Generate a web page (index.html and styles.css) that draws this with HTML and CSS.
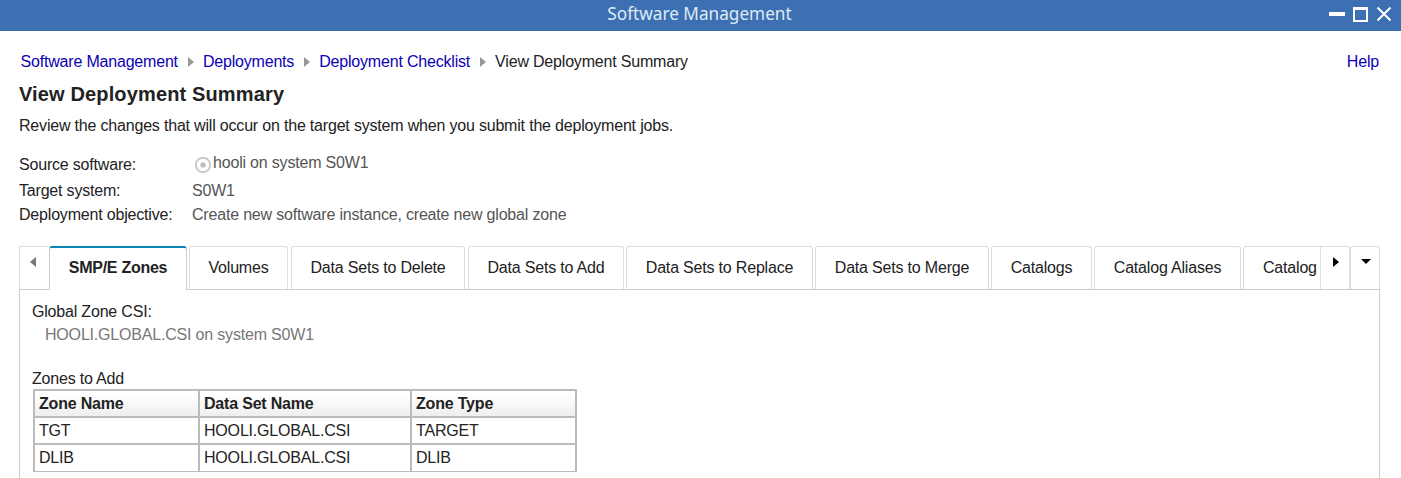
FILE: index.html
```html
<!DOCTYPE html>
<html lang="en">
<head>
<meta charset="utf-8">
<title>Software Management</title>
<link rel="stylesheet" href="styles.css">
</head>
<body>
<header class="titlebar">
  <span class="titlebar-text">Software Management</span>
  <svg class="window-controls" width="64" height="20" viewBox="0 0 64 20" fill="none" stroke="#fff">
    <path d="M0 9h16" stroke-width="4"/>
    <path d="M25 4h13v12H25z" stroke-width="2"/>
    <path d="M24 3.500h15" stroke-width="3"/>
    <path d="M48.500 2.500l13 13M61.500 2.500l-13 13" stroke-width="2"/>
  </svg>
</header>
<main class="page">
  <nav class="breadcrumb">
    <a class="link" href="#">Software Management</a>
    <svg class="crumb-arrow" width="6" height="10" viewBox="0 0 6 10"><path d="M0 0l6 5-6 5z"/></svg>
    <a class="link" href="#">Deployments</a>
    <svg class="crumb-arrow" width="6" height="10" viewBox="0 0 6 10"><path d="M0 0l6 5-6 5z"/></svg>
    <a class="link" href="#">Deployment Checklist</a>
    <svg class="crumb-arrow" width="6" height="10" viewBox="0 0 6 10"><path d="M0 0l6 5-6 5z"/></svg>
    <span>View Deployment Summary</span>
    <a class="link help" href="#">Help</a>
  </nav>
  <h1 class="heading">View Deployment Summary</h1>
  <p class="intro">Review the changes that will occur on the target system when you submit the deployment jobs.</p>
  <dl class="details">
    <dt>Source software:</dt>
    <dd class="source"><svg class="disc" width="18" height="18" viewBox="0 0 18 18" fill="none"><circle cx="9" cy="9" r="7.200" stroke="#c9c9c9" stroke-width="2"/><circle cx="9" cy="9" r="2.600" fill="#bdbdbd" stroke="#d9d9d9"/></svg><span>hooli on system S0W1</span></dd>
    <dt>Target system:</dt>
    <dd>S0W1</dd>
    <dt>Deployment objective:</dt>
    <dd>Create new software instance, create new global zone</dd>
  </dl>
  <div class="tabs">
    <button class="tab-button prev"><svg width="6" height="10" viewBox="0 0 6 10"><path d="M6 0v10L0 5z" fill="#777"/></svg></button>
    <div class="tab active">SMP/E Zones</div>
    <div class="tab volumes">Volumes</div>
    <div class="tab delete">Data Sets to Delete</div>
    <div class="tab add">Data Sets to Add</div>
    <div class="tab replace">Data Sets to Replace</div>
    <div class="tab merge">Data Sets to Merge</div>
    <div class="tab catalogs">Catalogs</div>
    <div class="tab aliases">Catalog Aliases</div>
    <div class="tab clipped">Catalog</div>
    <button class="tab-button next"><svg width="6" height="10" viewBox="0 0 6 10"><path d="M0 0l6 5-6 5z"/></svg></button>
    <button class="tab-button menu"><svg width="10" height="5" viewBox="0 0 10 5"><path d="M0 0h10L5 5z"/></svg></button>
  </div>
  <section class="panel">
    <div class="csi-label">Global Zone CSI:</div>
    <div class="csi-value">HOOLI.GLOBAL.CSI on system S0W1</div>
    <div class="zones-label">Zones to Add</div>
    <div class="zones">
      <div class="cell head">Zone Name</div><div class="cell head">Data Set Name</div><div class="cell head">Zone Type</div>
      <div class="cell">TGT</div><div class="cell">HOOLI.GLOBAL.CSI</div><div class="cell">TARGET</div>
      <div class="cell">DLIB</div><div class="cell">HOOLI.GLOBAL.CSI</div><div class="cell">DLIB</div>
    </div>
  </section>
</main>
</body>
</html>
```
FILE: styles.css
```css
* { box-sizing: border-box; }
body {
  margin: 0;
  height: 478px;
  overflow: hidden;
  background: #fff;
  color: #222;
  font: 16px/20px "Liberation Sans", Arial, sans-serif;
  letter-spacing: -0.19px;
  white-space: nowrap;
}
.titlebar {
  height: 31px;
  display: grid;
  grid-template-columns: 1fr auto 1fr;
  align-items: start;
  background: #3d70b2;
  padding: 0 8px 0 6px;
}
.titlebar-text {
  grid-column: 2;
  color: #dfeaf7;
  font: 17.2px/27px "Noto Sans", sans-serif;
  letter-spacing: 0;
}
.window-controls { justify-self: end; margin-top: 5px; }
.page { padding: 21px 21px 0 19px; }
.breadcrumb { display: flex; align-items: center; height: 20px; padding: 0 1px 0 1.5px; }
.link { color: #0b00b5; text-decoration: none; }
.crumb-arrow { margin: 0 9px 0 10px; fill: #999; }
.help { margin-left: auto; }
.heading { margin: 8px 0 0; font-size: 20px; line-height: 28px; letter-spacing: 0.14px; }
.intro { margin: 8px 0 0; }
.details {
  margin: 19px 0 0;
  display: grid;
  grid-template-columns: 173px auto;
  grid-template-rows: 26px 24px 24px;
}
.details dd { margin: 0; color: #555; }
.source { display: flex; }
.source span { margin: -2px 0 0 1px; }
.disc { margin: 1px 0 0 2px; }
.tabs { display: flex; height: 44px; margin-top: 17px; border-bottom: 1px solid #ccc; }
.tab {
  flex: none;
  height: 43px;
  margin-right: 2px;
  border: 1px solid #ddd;
  border-bottom: 0;
  border-radius: 3px 3px 0 0;
  text-align: center;
  line-height: 41px;
}
.active {
  width: 138px;
  height: 44px;
  border-color: #ccc;
  border-top: 2px solid #0b85b5;
  background: #fff;
  font-weight: bold;
  line-height: 40px;
  letter-spacing: -0.28px;
}
.volumes { width: 99px; margin-right: 3px; }
.delete { width: 174px; margin-right: 3px; }
.add { width: 156px; }
.replace { width: 187px; }
.merge { width: 174px; }
.catalogs { width: 101px; }
.aliases { width: 147px; }
.clipped { width: 77px; margin: 0; border-right: 0; border-top-right-radius: 0; padding-left: 19px; text-align: left; overflow: hidden; }
.tab-button {
  flex: none;
  display: flex;
  justify-content: center;
  width: 30px;
  height: 43px;
  padding: 10px 0 0;
  border: 1px solid #ddd;
  border-bottom: 0;
  background: #fff;
}
.tab-button.prev { border-right: 0; padding-right: 4px; }
.next { border-top-right-radius: 3px; padding-left: 2px; }
.menu { padding-top: 12px; padding-left: 2px; border-radius: 3px 3px 0 0; }
.panel { height: 190px; border: 1px solid #ccc; border-width: 0 1px; padding: 12px 12px 0; }
.csi-value { margin: 3px 0 0 13px; color: #777; }
.zones-label { margin-top: 24px; }
.zones {
  width: 544px;
  margin: 0 0 0 1px;
  padding: 2px;
  display: grid;
  grid-template-columns: 163px 210px 163px;
  grid-template-rows: 25px 25px 26px;
  gap: 2px;
  background: #bbb;
  padding-bottom: 1px;
}
.cell { background: #fff; padding-left: 4px; line-height: 25px; }
.head { font-weight: bold; background: linear-gradient(#fff 20%, #eee); }
```
